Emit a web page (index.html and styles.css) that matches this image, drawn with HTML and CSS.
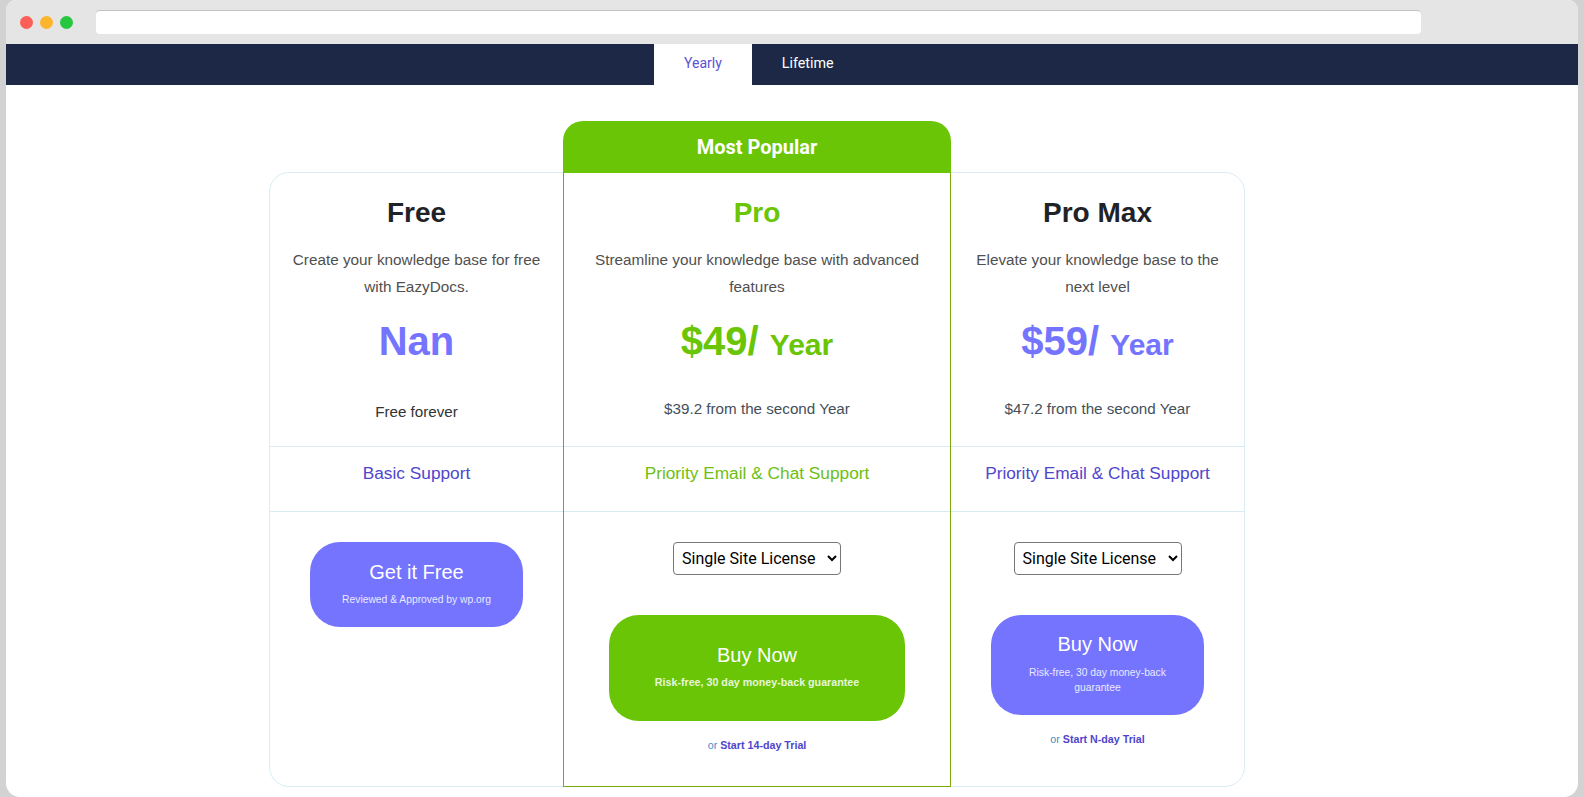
FILE: index.html
```html
<!doctype html>
<html lang="en">
  <head>
    <meta charset="UTF-8" />
    <meta name="viewport" content="width=device-width, initial-scale=1.0" />
    <title>EazyDocs Pricing</title>
    <link rel="stylesheet" href="styles.css">
  </head>

  <body>
    <div class="window">
      <div class="titlebar">
        <div class="dots">
          <span class="dot dot-red"></span>
          <span class="dot dot-yellow"></span>
          <span class="dot dot-green"></span>
        </div>
        <div class="address"></div>
      </div>

      <nav class="tabs">
        <a class="tab active">Yearly</a>
        <a class="tab">Lifetime</a>
      </nav>

      <div class="pricing">
        <div class="plan">
          <div class="plan-head">
            <h2>Free</h2>
            <p class="desc">Create your knowledge base for free with EazyDocs.</p>
            <div class="price">Nan</div>
            <p class="note note-free">Free forever</p>
          </div>
          <div class="support">Basic Support</div>
          <div class="plan-cta">
            <a class="buy buy-free">
              <span class="buy-title">Get it Free</span>
              <span class="buy-sub">Reviewed &amp; Approved by wp.org</span>
            </a>
          </div>
        </div>

        <div class="plan plan-popular">
          <div class="badge">Most Popular</div>
          <div class="plan-head">
            <h2>Pro</h2>
            <p class="desc">Streamline your knowledge base with advanced features</p>
            <div class="price">$49/ <small>Year</small></div>
            <p class="note">$39.2 from the second Year</p>
          </div>
          <div class="support">Priority Email &amp; Chat Support</div>
          <div class="plan-cta">
            <select class="license">
              <option>Single Site License</option>
            </select>
            <a class="buy buy-pro">
              <span class="buy-title">Buy Now</span>
              <span class="buy-sub">Risk-free, 30 day money-back guarantee</span>
            </a>
            <p class="trial">or <a>Start 14-day Trial</a></p>
          </div>
        </div>

        <div class="plan">
          <div class="plan-head">
            <h2>Pro Max</h2>
            <p class="desc">Elevate your knowledge base to the next level</p>
            <div class="price">$59/ <small>Year</small></div>
            <p class="note">$47.2 from the second Year</p>
          </div>
          <div class="support">Priority Email &amp; Chat Support</div>
          <div class="plan-cta">
            <select class="license">
              <option>Single Site License</option>
            </select>
            <a class="buy buy-max">
              <span class="buy-title">Buy Now</span>
              <span class="buy-sub">Risk-free, 30 day money-back guarantee</span>
            </a>
            <p class="trial">or <a>Start N-day Trial</a></p>
          </div>
        </div>
      </div>
    </div>
  </body>
</html>
```

FILE: styles.css
```css
html,
body {
  margin: 0;
  height: 100%;
  overflow: hidden;
}
body {
  background: #d2d2d2;
  font-family: 'Liberation Sans', Arial, sans-serif;
}
.window {
  margin: 0 6px;
  height: 797px;
  background: #ffffff;
  border-radius: 10px 10px 14px 14px;
  overflow: hidden;
}

/* browser chrome */
.titlebar {
  display: flex;
  align-items: center;
  height: 44px;
  padding: 0 157px 0 14px;
  box-sizing: border-box;
  background: #e5e5e5;
}
.dots {
  display: flex;
  gap: 7px;
  margin-right: 23px;
}
.dot {
  width: 13px;
  height: 13px;
  border-radius: 50%;
}
.dot-red {
  background: #fc5f57;
}
.dot-yellow {
  background: #fdb52e;
}
.dot-green {
  background: #26c73f;
}
.address {
  width: 1325px;
  height: 24px;
  background: #ffffff;
  border-top: 1px solid #c4c4c4;
  border-radius: 4px;
  box-sizing: border-box;
}

/* tabs */
.tabs {
  display: flex;
  height: 41px;
  padding-left: 648px;
  background: #1c2846;
  font-family: Roboto, sans-serif;
  font-size: 14px;
}
.tab {
  display: flex;
  align-items: center;
  padding: 0 30px 4px;
  color: #ffffff;
  font-size: 14.3px;
}
.tab.active {
  background: #ffffff;
  color: #5a52d5;
  font-size: 14px;
}

/* plans */
.pricing {
  display: grid;
  grid-template-columns: 293px 388px 293px;
  width: 976px;
  height: 615px;
  margin: 87px 0 0 263px;
  border: 1px solid #d9ecf3;
  border-radius: 20px;
  box-sizing: border-box;
}
.plan {
  display: flex;
  flex-direction: column;
  text-align: center;
}
.plan-popular {
  position: relative;
  margin: -1px 0;
  border: 1px solid #7aa80f;
}
.badge {
  position: absolute;
  left: -1px;
  right: -1px;
  bottom: 100%;
  height: 52px;
  line-height: 53px;
  background: #69c505;
  border-radius: 20px 20px 0 0;
  color: #ffffff;
  font-family: Roboto, sans-serif;
  font-size: 20px;
  font-weight: 700;
}
.plan-head {
  height: 274px;
  padding: 22px 22px 0;
  box-sizing: border-box;
  border-bottom: 1px solid #d9ecf3;
}
.plan h2 {
  margin: 0 0 15px;
  font-size: 28px;
  line-height: 36px;
  color: #1f2327;
}
.plan-popular h2 {
  color: #69c505;
}
.desc {
  margin: 0;
  font-size: 15.3px;
  line-height: 27px;
  color: #505050;
}
.price {
  margin-top: 14px;
  font-size: 40px;
  line-height: 54px;
  font-weight: 700;
  color: #7474ff;
}
.price small {
  font-size: 30px;
}
.plan-popular .price {
  color: #69c505;
}
.note {
  margin: 25px 0 0;
  font-size: 15.2px;
  line-height: 24px;
  color: #444f5a;
}
.note-free {
  margin-top: 32px;
  color: #333333;
}
.support {
  height: 65px;
  padding-top: 13px;
  box-sizing: border-box;
  border-bottom: 1px solid #d9ecf3;
  font-size: 17.3px;
  line-height: 26px;
  color: #4f46cc;
}
.plan-popular .support {
  color: #6cbf12;
}
.plan-cta {
  display: flex;
  flex-direction: column;
  align-items: center;
  padding-top: 30px;
}
.license {
  width: 168px;
  height: 33px;
  padding: 0 4px;
  margin-bottom: 40px;
  background: #ffffff;
  border: 1px solid #767676;
  border-radius: 4px;
  color: #000000;
  font-family: Roboto, sans-serif;
  font-size: 16px;
}
.buy {
  display: flex;
  flex-direction: column;
  align-items: center;
  box-sizing: border-box;
  border-radius: 30px;
  color: #ffffff;
  text-align: center;
}
.buy-title {
  font-size: 20px;
  line-height: 26px;
}
.buy-sub {
  font-size: 10.3px;
  line-height: 15px;
  opacity: 0.85;
}
.buy-free {
  width: 213px;
  height: 85px;
  padding-top: 17px;
  background: #7474ff;
}
.buy-free .buy-sub {
  margin-top: 7px;
}
.buy-pro {
  width: 296px;
  height: 106px;
  padding-top: 27px;
  background: #69c505;
}
.buy-pro .buy-sub {
  margin-top: 7px;
  font-size: 10.7px;
  font-weight: 700;
}
.buy-max {
  width: 213px;
  height: 100px;
  padding: 16px 20px 0;
  background: #7474ff;
}
.buy-max .buy-sub {
  margin-top: 8px;
}
.trial {
  margin: 16px 0 0;
  font-size: 10.7px;
  line-height: 16px;
  color: #3f8fc9;
}
.trial a {
  font-weight: 700;
  color: #4f46cc;
}
```
